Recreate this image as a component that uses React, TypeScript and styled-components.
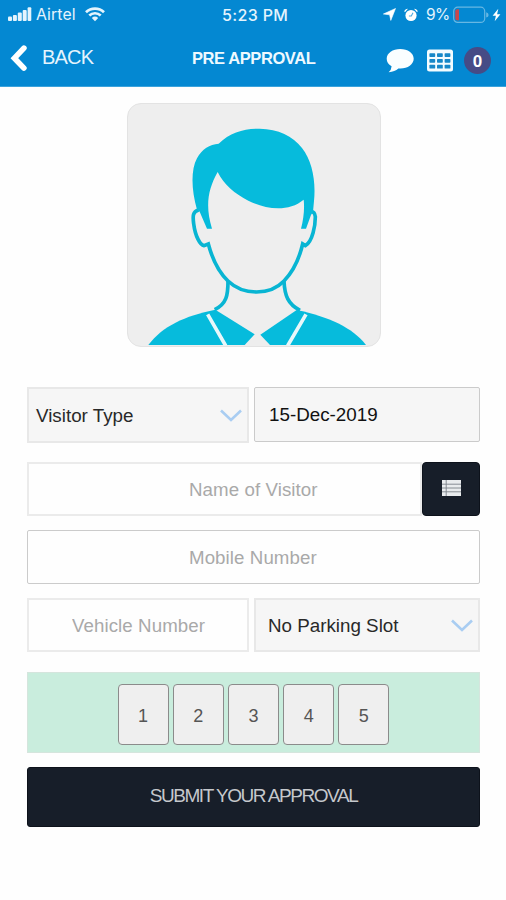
import React from "react";
import styled, { createGlobalStyle } from "styled-components";

const GlobalStyle = createGlobalStyle`
  * { box-sizing: border-box; }
  body { margin: 0; background: #fefefe; }
`;

const Screen = styled.div`
  width: 506px;
  height: 900px;
  overflow: hidden;
  background: #fefefe;
  font-family: "Liberation Sans", Arial, sans-serif;
`;

const Header = styled.header`
  height: 87px;
  background: #0488d2;
  border-bottom: 1px solid #3ba3dc;
  color: #fff;
`;

const StatusBar = styled.div`
  height: 29px;
  display: grid;
  grid-template-columns: 222px 1fr auto;
  align-items: center;
  padding: 0 5px 0 0;
  font-family: Inter, "Liberation Sans", sans-serif;
  color: #e4f4fd;
`;

const Carrier = styled.div`
  display: flex;
  align-items: center;
  padding-left: 8px;
  font-size: 15.8px;
  letter-spacing: 0.1px;

  span { width: 41px; margin: 0 8px 0 4px; white-space: nowrap; }
`;

const Clock = styled.div`
  font-size: 16px;
  font-weight: 500;
  letter-spacing: 0.35px;
`;

const Indicators = styled.div`
  display: flex;
  align-items: center;
  font-size: 15.5px;

  span { width: 24px; margin: 0 3px 0 8px; letter-spacing: -0.6px; }
`;

const NavBar = styled.nav`
  height: 57px;
  display: grid;
  grid-template-columns: 192px 1fr auto;
  align-items: center;
  padding-right: 15px;
`;

const BackButton = styled.button`
  display: flex;
  align-items: center;
  gap: 13px;
  padding: 0 0 0 9px;
  border: 0;
  background: none;
  color: #e4f4fd;
  font: 20px "Liberation Sans", sans-serif;
  letter-spacing: -0.8px;
`;

const Title = styled.h1`
  margin: 0;
  padding-top: 1px;
  font-size: 16.5px;
  font-weight: bold;
  letter-spacing: -0.42px;
  white-space: nowrap;
  color: #eef9ff;
`;

const NavActions = styled.div`
  display: flex;
  align-items: center;
  padding-top: 5px;
`;

const Counter = styled.div`
  width: 27px;
  height: 27px;
  margin-left: 11px;
  border-radius: 50%;
  background: #464b86;
  font-size: 17px;
  font-weight: bold;
  line-height: 29px;
  text-align: center;
`;

const Photo = styled.div`
  width: 254px;
  height: 244px;
  margin: 16px auto 0 127px;
  border: 1px solid #e3e3e3;
  border-radius: 14px;
  background: #eee;
  overflow: hidden;

  svg { display: block; margin: -1px; }
`;

const Form = styled.form`
  display: flex;
  flex-direction: column;
  width: 453px;
  margin: 40px 0 0 27px;
`;

const Row = styled.div<{ $gap?: number; $top?: number }>`
  display: flex;
  gap: ${(p) => p.$gap ?? 0}px;
  margin-top: ${(p) => p.$top ?? 0}px;
`;

const Field = styled.div<{ $w: number; $h?: number; $filled?: boolean; $strong?: boolean; $left?: number }>`
  width: ${(p) => p.$w}px;
  height: ${(p) => p.$h ?? 54}px;
  display: flex;
  align-items: center;
  justify-content: space-between;
  padding: 1px 4px 0 ${(p) => p.$left ?? 15}px;
  border: ${(p) => (p.$strong ? "1px solid #cbcbcb" : "2px solid #e8e8e8")};
  border-radius: ${(p) => (p.$strong ? 2 : 0)}px;
  background: ${(p) => (p.$filled ? "#f6f6f6" : "#fefefe")};
  color: ${(p) => (p.$strong ? "#111" : "#292929")};
  font-size: 18.8px;
  white-space: nowrap;
`;

const Input = styled.input<{ $w: number; $indent: number; $strong?: boolean }>`
  width: ${(p) => p.$w}px;
  height: 54px;
  padding: 2px 0 0 ${(p) => p.$indent}px;
  border: ${(p) => (p.$strong ? "1px solid #cbcbcb" : "2px solid #ebebeb")};
  border-radius: ${(p) => (p.$strong ? 2 : 0)}px;
  background: #fefefe;
  font: 18.7px "Liberation Sans", sans-serif;
  letter-spacing: 0.08px;
  outline: 0;

  &::placeholder { color: #a9a9a9; opacity: 1; }
`;

const ListButton = styled.button`
  width: 58px;
  height: 54px;
  display: flex;
  align-items: center;
  justify-content: center;
  padding: 0 0 3px;
  border: 1px solid #0d121b;
  border-radius: 4px;
  background: #171e29;
`;

const CountPanel = styled.div`
  height: 81px;
  display: flex;
  justify-content: center;
  gap: 4px;
  margin-top: 20px;
  padding-top: 11px;
  border: 1px solid #d5e5dd;
  background: #c9eddd;
`;

const CountButton = styled.button`
  width: 51.2px;
  height: 61px;
  padding: 4px 0 0;
  border: 1px solid #8b8b8b;
  border-radius: 4px;
  background: #efefef;
  color: #555;
  font: 18px "Liberation Sans", sans-serif;
`;

const Submit = styled.button`
  height: 60px;
  margin-top: 14px;
  padding: 0 0 2px;
  border: 1px solid #0d121b;
  border-radius: 3px;
  background: #171e29;
  color: #c5c8cc;
  font: 19px "Liberation Sans", sans-serif;
  letter-spacing: -1.45px;
`;

const Chevron = () => (
  <svg width="24" height="16" viewBox="0 0 24 16" fill="none" stroke="#a9cdf2" strokeWidth="2.6">
    <path d="M2 2.5 12 12 22 2.5" />
  </svg>
);

const Signal = () => (
  <svg width="24" height="15" viewBox="0 0 24 15" fill="#e4f4fd">
    <rect x="0" y="9.5" width="4" height="4.5" rx="1" />
    <rect x="4.9" y="8" width="4" height="6" rx="1" />
    <rect x="9.8" y="5.5" width="4" height="8.5" rx="1" />
    <rect x="14.7" y="3" width="4" height="11" rx="1" />
    <rect x="19.6" y="0.3" width="3.7" height="13.7" rx="1" />
  </svg>
);

const Wifi = () => (
  <svg width="20" height="15" viewBox="0 0 20 15" fill="none" stroke="#e4f4fd" strokeWidth="2.7">
    <path d="M1 5.2C6 .3 14 .3 19 5.2M4.3 8.5C7.5 5.5 12.5 5.5 15.7 8.5" />
    <path d="M6.8 10.9Q10 8 13.2 10.9L10 14.3Z" fill="#e4f4fd" stroke="none" />
  </svg>
);

const Location = () => (
  <svg width="13" height="13" viewBox="0 0 13 13" fill="#fff" stroke="#fff" strokeWidth="0.6">
    <path d="M12.5.5 7.8 12.4 6.6 6.8.4 6Z" />
  </svg>
);

const Alarm = () => (
  <svg width="14" height="14" viewBox="0 0 14 14" style={{ marginLeft: 8 }} fill="#fff">
    <circle cx="7" cy="7.5" r="5.6" />
    <path d="M.3 3.3Q1 .7 4 .7L.9 4.3ZM13.7 3.3Q13 .7 10 .7L13.1 4.3Z" />
    <path d="M9 4.8 7.3 8H4.9" fill="none" stroke="#4eabdf" strokeWidth="1.1" />
  </svg>
);

const Battery = () => (
  <svg width="36" height="18" viewBox="0 0 36 18">
    <rect x="0.7" y="1.2" width="31" height="15.2" rx="4" fill="none" stroke="#67b7e3" strokeWidth="1.2" />
    <path d="M4 3.2H6V14.3H4Q2.3 14.3 2.3 12.3V5.2Q2.3 3.2 4 3.2Z" fill="#c9464b" />
    <path d="M33.2 6.2Q35.6 6.7 35.6 8.9T33.2 11.6Z" fill="#67b7e3" />
  </svg>
);

const Bolt = () => (
  <svg width="9" height="14" viewBox="0 0 9 14" style={{ marginLeft: 3 }} fill="#fff">
    <path d="M6.3.7.6 7.8H3.9L2.7 13.3 8.4 6.2H5.1Z" />
  </svg>
);

const BackArrow = () => (
  <svg width="20" height="28" viewBox="0 0 20 28" fill="none" stroke="#fff" strokeWidth="5.6" strokeLinecap="round">
    <path d="M14.9 4.1 5.4 14.2 14.9 24.1" />
  </svg>
);

const Bubble = () => (
  <svg width="28" height="25" viewBox="0 0 28 25" fill="#fafeff">
    <path d="M14.2 1C21.8 1 27.7 5.2 27.7 10.7S21.8 20.5 14.4 20.5L12.4 20.4Q8.9 23.5 2.6 24.3 5.5 21.8 5.6 18.3 .7 15.5.7 10.7C.7 5.2 6.8 1 14.2 1Z" />
  </svg>
);

const Table = () => (
  <svg width="26" height="23" viewBox="0 0 26 23" style={{ marginLeft: 13 }}>
    <rect x="0" y="0.4" width="26" height="22.2" rx="2.5" fill="#f3fcff" />
    {[2.4, 10, 17.6].map((x) =>
      [4.2, 10, 15.8].map((y) => <rect key={`${x}-${y}`} x={x} y={y} width="5.8" height="3.8" rx="0.7" fill="#1688c8" />)
    )}
  </svg>
);

const ListIcon = () => (
  <svg width="19" height="16" viewBox="0 0 19 16">
    <rect width="19" height="16" fill="#e8ebed" />
    <path d="M0 4.2H19M0 8H19M0 11.8H19M4.2 0V16" stroke="#7c8289" strokeWidth="0.9" />
  </svg>
);

const Person = () => (
  <svg width="254" height="244" viewBox="21 24 762 732">
    <g fill="none" stroke="#08b5d3" strokeWidth="11">
      <path d="M236 345C218 349 218 364 221 386C226 424 240 450 252 452L265 447C279 500 300 535 324 558C370 602 450 602 492 558C520 529 538 490 548 447L556 452C578 440 586 390 586 365Q584 350 574 350" />
      <path d="M324 558C324 600 320 627 284 644M492 558C494 602 504 628 540 646" />
    </g>
    <g fill="#06bbdc">
      <path d="M231 344C214 285 212 225 231 190C246 161 269 149 296 146C330 112 374 100 419 101C475 102 518 123 546 159C577 199 588 258 582 318L579 350 573 360 558 401 543 401C551 372 554 339 551 314C504 353 435 342 385 317C345 297 311 268 293 231C264 283 255 332 276 401H261L239 350Z" />
      <path d="M85 750C126 694 195 662 286 644L404 718 374 750Z" />
      <path d="M738 750C698 698 628 666 530 645L421 719 450 750Z" />
    </g>
    <path d="M263 658 317 752M558 658 503 752" fill="none" stroke="#e9f7fa" strokeWidth="11" />
  </svg>
);

export default function App() {
  return (
    <Screen>
      <GlobalStyle />
      <Header>
        <StatusBar>
          <Carrier><Signal /><span>Airtel</span><Wifi /></Carrier>
          <Clock>5:23 PM</Clock>
          <Indicators><Location /><Alarm /><span>9%</span><Battery /><Bolt /></Indicators>
        </StatusBar>
        <NavBar>
          <BackButton><BackArrow />BACK</BackButton>
          <Title>PRE APPROVAL</Title>
          <NavActions><Bubble /><Table /><Counter>0</Counter></NavActions>
        </NavBar>
      </Header>
      <Photo><Person /></Photo>
      <Form>
        <Row $gap={5}>
          <Field $w={222} $h={56} $filled $left={7}>Visitor Type<Chevron /></Field>
          <Field $w={226} $h={55} $filled $strong $left={14}>15-Dec-2019</Field>
        </Row>
        <Row $top={19}>
          <Input $w={395} $indent={160} placeholder="Name of Visitor" />
          <ListButton type="button"><ListIcon /></ListButton>
        </Row>
        <Row $top={14}>
          <Input $w={453} $indent={161} $strong placeholder="Mobile Number" />
        </Row>
        <Row $gap={5} $top={14}>
          <Input $w={222} $indent={43} placeholder="Vehicle Number" />
          <Field $w={226} $filled $left={12}>No Parking Slot<Chevron /></Field>
        </Row>
        <CountPanel>
          {[1, 2, 3, 4, 5].map((n) => <CountButton key={n} type="button">{n}</CountButton>)}
        </CountPanel>
        <Submit type="button">SUBMIT YOUR APPROVAL</Submit>
      </Form>
    </Screen>
  );
}
